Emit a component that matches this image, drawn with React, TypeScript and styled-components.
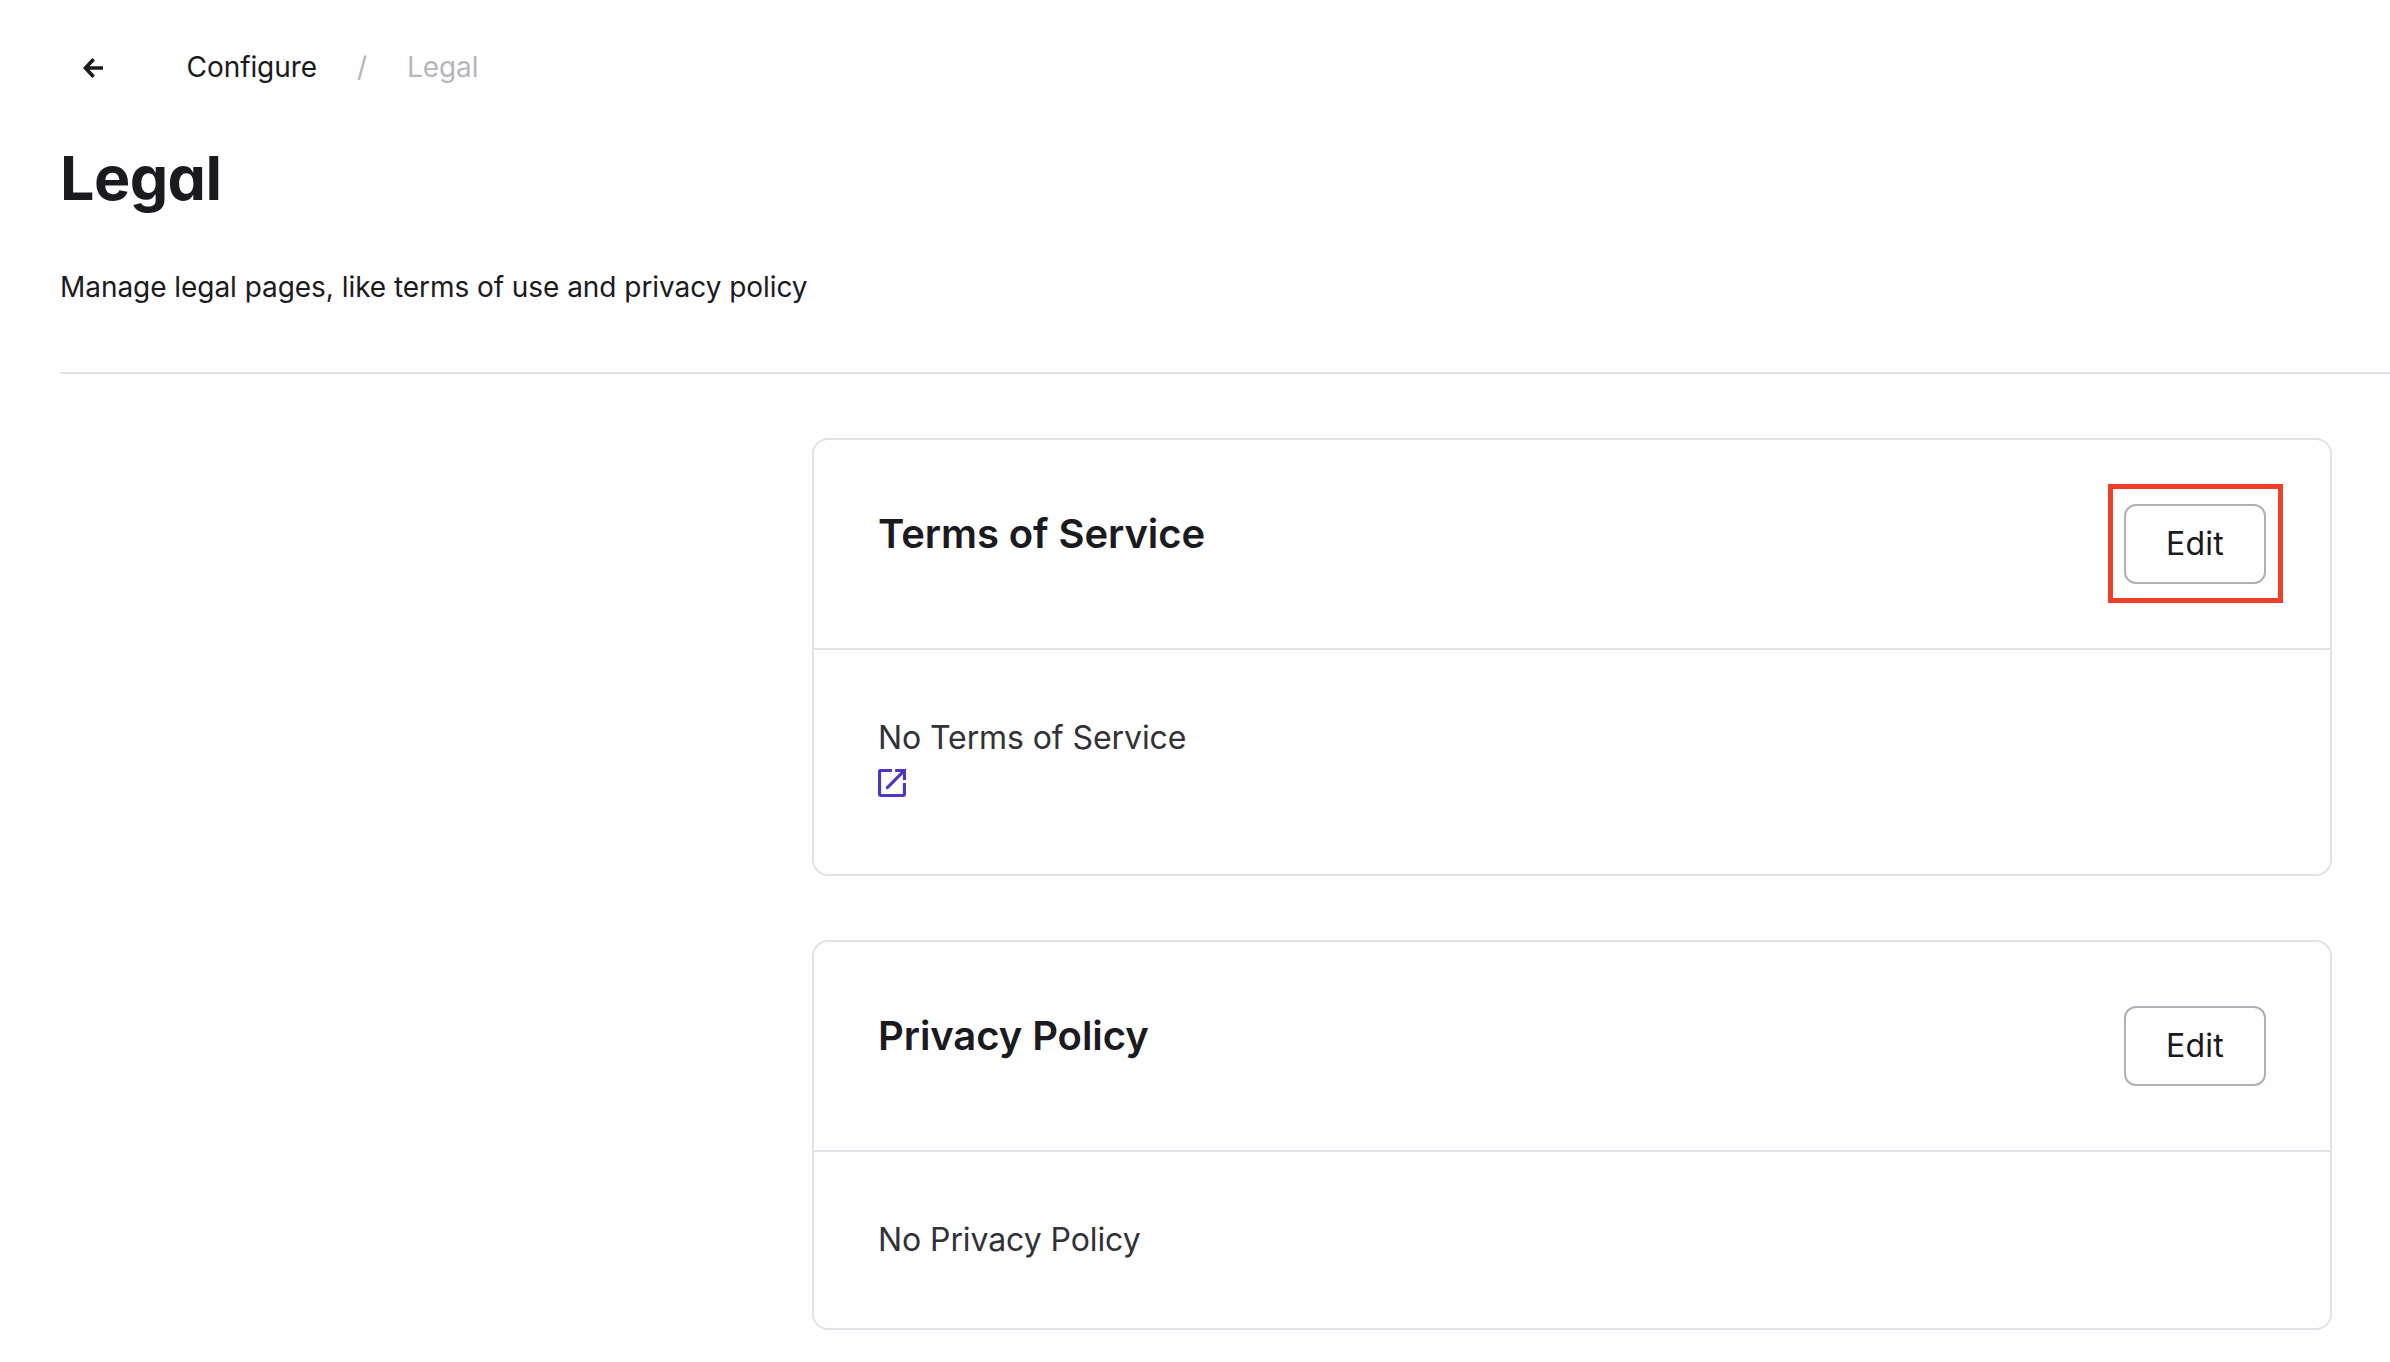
import React from 'react';
import styled, { createGlobalStyle } from 'styled-components';

const GlobalStyle = createGlobalStyle`
  *, *::before, *::after { box-sizing: border-box; }
  body {
    margin: 0;
    background: #fefefe;
    color: #1b1a1f;
    font-family: Inter, 'Liberation Sans', sans-serif;
    overflow: hidden;
  }
`;

const Page = styled.main`
  display: flex;
  flex-direction: column;
  height: 1362px;
  padding-left: 60px;
`;

const Header = styled.header`
  display: flex;
  flex-direction: column;
  height: 374px;
  padding-top: 47px;
  border-bottom: 2px solid #e2e1e9;
`;

const Breadcrumbs = styled.nav`
  display: flex;
  align-items: center;
  gap: 40px;
  height: 40px;
  font-size: 28px;
  line-height: 40px;
  letter-spacing: -0.08px;
`;

const BackButton = styled.button`
  display: flex;
  align-items: center;
  justify-content: center;
  width: 66px;
  height: 40px;
  margin-right: 20.6px;
  padding: 2px 0 0;
  border: 0;
  background: none;
  color: inherit;
`;

const Crumb = styled.span<{ $muted?: boolean }>`
  color: ${({ $muted }) => ($muted ? '#b7b5bd' : 'inherit')};
`;

const Title = styled.h1`
  margin: 51px 0 0;
  font-size: 61px;
  font-weight: 700;
  line-height: 80px;
  letter-spacing: -0.6px;
  font-feature-settings: 'cv11';
`;

const Description = styled.p`
  margin: 49px 0 0;
  font-size: 28px;
  line-height: 40px;
  letter-spacing: -0.05px;
`;

const Cards = styled.section`
  display: flex;
  flex-direction: column;
  gap: 64px;
  width: 1520px;
  margin: 64px 0 0 752px;
`;

const Card = styled.article`
  border: 2px solid #e2e1e9;
  border-radius: 16px;
`;

const CardHeader = styled.div`
  display: flex;
  align-items: flex-start;
  justify-content: space-between;
  padding: 64px;
  border-bottom: 2px solid #e2e1e9;
`;

const CardTitle = styled.h2`
  margin: 0;
  font-size: 40px;
  font-weight: 600;
  line-height: 59px;
  letter-spacing: -0.08px;
`;

const EditButton = styled.button<{ $highlighted?: boolean }>`
  width: 142px;
  height: 80px;
  padding: 0;
  border: 2px solid #b0aeb8;
  border-radius: 12px;
  background: none;
  color: inherit;
  font: 400 32px/48px Inter, 'Liberation Sans', sans-serif;
  letter-spacing: 0.2px;
  position: relative;

  &::after {
    content: '';
    display: ${({ $highlighted }) => ($highlighted ? 'block' : 'none')};
    position: absolute;
    inset: -22px -19px -21px -18px;
    border: 5px solid #ee4027;
  }
`;

const CardBody = styled.div`
  padding: 64px;
  color: #323138;
  font-size: 32px;
  line-height: 48px;
  letter-spacing: -0.09px;
`;

const ExternalLink = styled.a`
  display: flex;
  height: 48px;
  padding-top: 7px;
  color: #4f36c1;
`;

const ArrowLeft = () => (
  <svg width="20" height="20" viewBox="0 0 20 20" fill="none" stroke="currentColor" strokeWidth="3.6">
    <path d="M20 10H3M10.6 1.2L2.4 10l8.2 8.8" />
  </svg>
);

const OpenInNew = () => (
  <svg width="28" height="28" viewBox="3 3 18 18" fill="currentColor">
    <path d="M19 19H5V5h7V3H4.6A1.6 1.6 0 0 0 3 4.6v14.8A1.6 1.6 0 0 0 4.6 21h14.8a1.6 1.6 0 0 0 1.6-1.6V12h-2v7zM14 3v2h3.59L8.3 14.3a.97.97 0 0 0 1.4 1.4L19 6.41V10h2V3h-7z" />
  </svg>
);

type PolicyCardProps = { name: string; highlighted?: boolean; linked?: boolean };

const PolicyCard = ({ name, highlighted, linked }: PolicyCardProps) => (
  <Card>
    <CardHeader>
      <CardTitle>{name}</CardTitle>
      <EditButton $highlighted={highlighted}>Edit</EditButton>
    </CardHeader>
    <CardBody>
      No {name}
      {linked && (
        <ExternalLink>
          <OpenInNew />
        </ExternalLink>
      )}
    </CardBody>
  </Card>
);

export default function App() {
  return (
    <Page>
      <GlobalStyle />
      <Header>
        <Breadcrumbs>
          <BackButton aria-label="Back">
            <ArrowLeft />
          </BackButton>
          <Crumb>Configure</Crumb>
          <Crumb $muted>/</Crumb>
          <Crumb $muted>Legal</Crumb>
        </Breadcrumbs>
        <Title>Legal</Title>
        <Description>Manage legal pages, like terms of use and privacy policy</Description>
      </Header>
      <Cards>
        <PolicyCard name="Terms of Service" highlighted linked />
        <PolicyCard name="Privacy Policy" />
      </Cards>
    </Page>
  );
}
